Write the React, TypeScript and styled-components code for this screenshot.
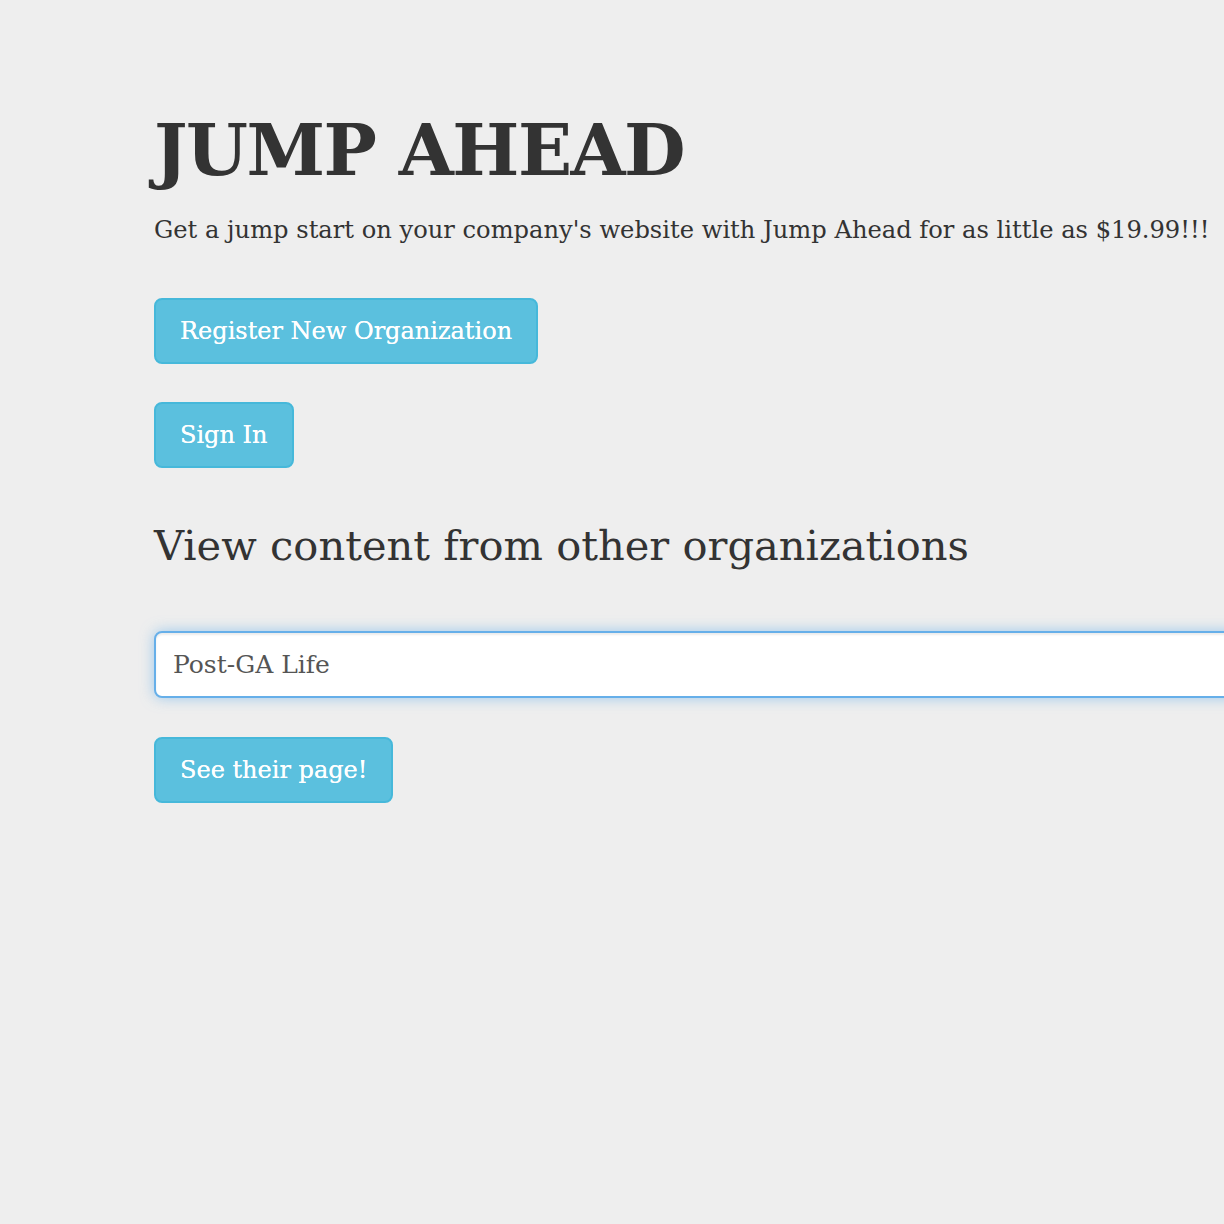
import React from 'react';
import styled, { createGlobalStyle } from 'styled-components';

const GlobalStyle = createGlobalStyle`
  html, body {
    margin: 0;
    padding: 0;
    background-color: #eeeeee;
    overflow: hidden;
  }
  body {
    font-family: 'DejaVu Serif', 'Liberation Serif', serif;
    color: #333333;
  }
`;

const Page = styled.main`
  display: flex;
  flex-direction: column;
  align-items: flex-start;
  min-height: 1224px;
  padding: 114px 0 0 154px;
  box-sizing: border-box;
`;

const Title = styled.h1`
  margin: 0;
  font-size: 71px;
  line-height: 72px;
  font-weight: bold;
  letter-spacing: -1.5px;
`;

const Lead = styled.p`
  margin: 27px 0 0;
  font-size: 24.18px;
  line-height: 35px;
  white-space: nowrap;
`;

const Subtitle = styled.h2`
  margin: 50px 0 0;
  font-size: 41.6px;
  line-height: 55px;
  font-weight: normal;
`;

const Button = styled.button<{ $top: number }>`
  margin-top: ${(p) => p.$top}px;
  height: 66px;
  padding: 0 24px;
  box-sizing: border-box;
  background-color: #5bc0de;
  border: 2px solid #46b8da;
  border-radius: 8px;
  color: #ffffff;
  font-family: 'DejaVu Serif', 'Liberation Serif', serif;
  font-size: 24px;
  text-shadow: 0 0 0.6px #ffffff;
  cursor: pointer;
`;

const SearchInput = styled.input`
  margin-top: 58px;
  width: 1200px;
  height: 67px;
  box-sizing: border-box;
  padding: 0 17px;
  background: #ffffff;
  border: 2px solid #66afe9;
  border-radius: 8px;
  box-shadow: inset 0 2px 2px rgba(0, 0, 0, 0.075), 0 0 14px rgba(102, 175, 233, 0.6);
  outline: none;
  color: #555555;
  font-family: 'DejaVu Serif', 'Liberation Serif', serif;
  font-size: 25px;
`;

export default function App() {
  return (
    <>
      <GlobalStyle />
      <Page>
        <Title>JUMP AHEAD</Title>
        <Lead>Get a jump start on your company's website with Jump Ahead for as little as $19.99!!!</Lead>
        <Button $top={50}>Register New Organization</Button>
        <Button $top={38}>Sign In</Button>
        <Subtitle>View content from other organizations</Subtitle>
        <SearchInput defaultValue="Post-GA Life" />
        <Button $top={39}>See their page!</Button>
      </Page>
    </>
  );
}
